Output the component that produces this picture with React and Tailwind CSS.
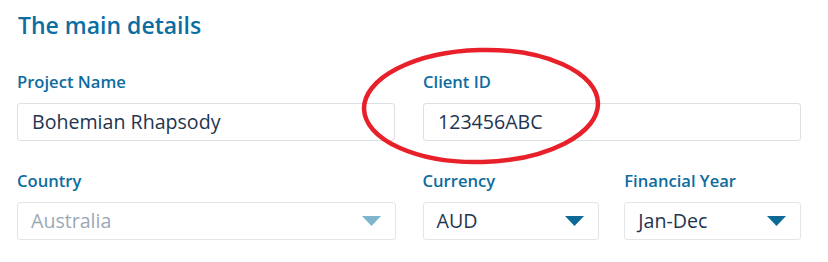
import React from "react";

const font = { fontFamily: '"Open Sans", "Noto Sans", sans-serif' };

function Arrow({ light }) {
  return (
    <svg width="19" height="10" viewBox="0 0 19 10" className="shrink-0">
      <polygon points="0,0 19,0 9.5,10" fill={light ? "#7fb4cf" : "#0d6a96"} />
    </svg>
  );
}

function Label({ children }) {
  return (
    <div className="text-[16.6px] leading-[20px] font-semibold text-[#0e6c9f] mb-[11px]">
      {children}
    </div>
  );
}

function Input({ value }) {
  return (
    <div className="h-[38px] border border-[#dcdfe4] rounded-[3px] flex items-center px-[14px] text-[19.6px] text-[#1f3550]">
      {value}
    </div>
  );
}

function Select({ value, disabled }) {
  return (
    <div
      className={
        "h-[38px] border border-[#e2e5e9] rounded-[3px] flex items-center justify-between pl-[13px] pr-[14px] text-[19.6px] " +
        (disabled ? "text-[#9aa9b6]" : "text-[#1f3550]")
      }
    >
      <span>{value}</span>
      <Arrow light={disabled} />
    </div>
  );
}

export default function App() {
  return (
    <div className="relative w-[828px] h-[262px] bg-white overflow-hidden" style={font}>
      <div className="pl-[17px] pr-[27px] pt-[10px]">
        <h1 className="text-[23px] leading-[30px] font-semibold text-[#0b6ea3] pl-[1px]">
          The main details
        </h1>
        <div className="grid grid-cols-2 gap-x-[28px] mt-[32px]">
          <div>
            <Label>Project Name</Label>
            <Input value="Bohemian Rhapsody" />
          </div>
          <div>
            <Label>Client ID</Label>
            <Input value="123456ABC" />
          </div>
        </div>
        <div className="grid grid-cols-2 gap-x-[27px] mt-[30px]">
          <div>
            <Label>Country</Label>
            <Select value="Australia" disabled />
          </div>
          <div className="grid grid-cols-2 gap-x-[25px]">
            <div>
              <Label>Currency</Label>
              <Select value="AUD" />
            </div>
            <div>
              <Label>Financial Year</Label>
              <Select value="Jan-Dec" />
            </div>
          </div>
        </div>
      </div>
      <svg
        className="absolute left-0 top-0 pointer-events-none"
        width="828"
        height="262"
        viewBox="0 0 828 262"
      >
        <ellipse
          cx="481"
          cy="106"
          rx="117"
          ry="56"
          fill="none"
          stroke="#e8202a"
          strokeWidth="4.5"
          transform="rotate(-1.5 481 106)"
        />
      </svg>
    </div>
  );
}
